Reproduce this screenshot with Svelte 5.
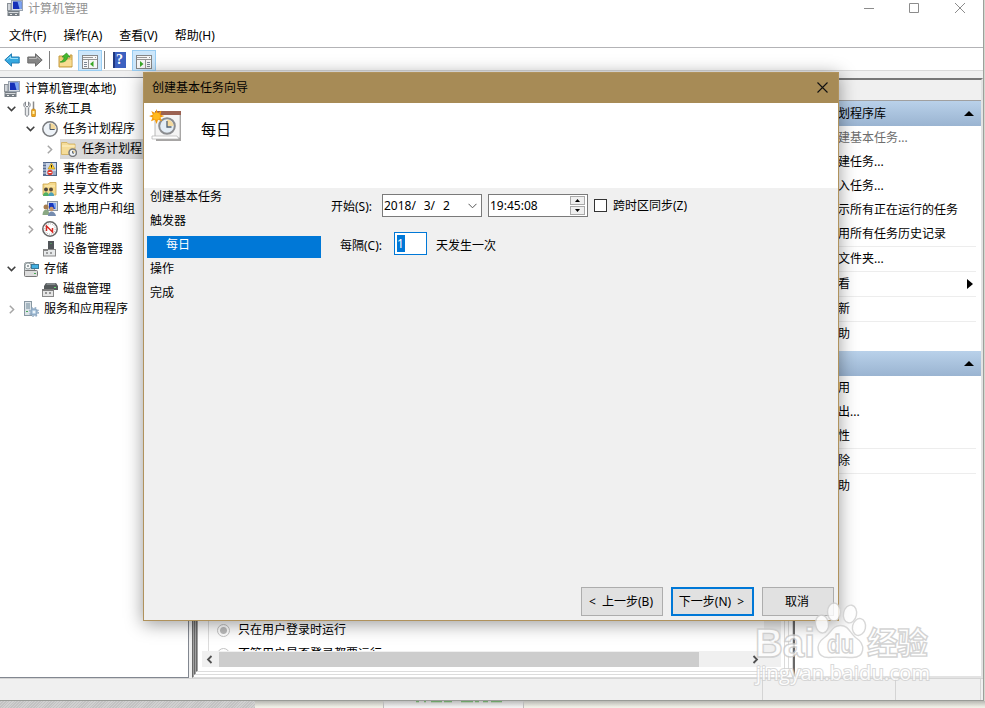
<script>
	const menus = ['文件(F)', '操作(A)', '查看(V)', '帮助(H)'];

	const tree = [
		{ level: 0, icon: 'computer', label: '计算机管理(本地)' },
		{ level: 1, icon: 'tools', label: '系统工具', open: true },
		{ level: 2, icon: 'clock', label: '任务计划程序', open: true },
		{ level: 3, icon: 'taskfolder', label: '任务计划程', open: false, selected: true },
		{ level: 2, icon: 'events', label: '事件查看器', open: false },
		{ level: 2, icon: 'shared', label: '共享文件夹', open: false },
		{ level: 2, icon: 'users', label: '本地用户和组', open: false },
		{ level: 2, icon: 'perf', label: '性能', open: false },
		{ level: 2, icon: 'device', label: '设备管理器' },
		{ level: 1, icon: 'storage', label: '存储', open: true },
		{ level: 2, icon: 'disk', label: '磁盘管理' },
		{ level: 1, icon: 'services', label: '服务和应用程序', open: false }
	];

	const groups = [
		{
			title: '划程序库',
			items: [
				{ label: '建基本任务...', muted: true },
				{ label: '建任务...' },
				{ label: '入任务...' },
				{ label: '示所有正在运行的任务' },
				{ label: '用所有任务历史记录', line: true },
				{ label: '文件夹...', line: true },
				{ label: '看', line: true, more: true },
				{ label: '新', line: true },
				{ label: '助' }
			]
		},
		{
			title: '',
			items: [
				{ label: '用' },
				{ label: '出...' },
				{ label: '性', line: true },
				{ label: '除', line: true },
				{ label: '助' }
			]
		}
	];

	const steps = [
		{ label: '创建基本任务' },
		{ label: '触发器' },
		{ label: '每日', active: true },
		{ label: '操作' },
		{ label: '完成' }
	];

	let interval = $state('1');
	let syncZones = $state(false);
</script>

{#snippet clockFace(cx, cy, r)}
	<circle {cx} {cy} {r} fill="#eef3f8" stroke="#77797c" stroke-width="1.5" />
	<path d="M{cx} {cy}V{cy - r + 1.2}A{r - 1.2} {r - 1.2} 0 0 1 {cx + r - 1.2} {cy}Z" fill="#f3d89a" />
	<path d="M{cx} {cy - r + 2}V{cy + 0.5}H{cx + r - 2.5}" fill="none" stroke="#4c5968" />
{/snippet}

{#snippet icon(name)}
	<svg class="icon" width="16" height="16" viewBox="0 0 16 16">
		{#if name === 'computer'}
			<rect x="4.5" y="0.5" width="11" height="10" fill="#d7dce2" stroke="#9aa4b0" />
			<rect x="6" y="1.5" width="8.5" height="7.5" fill="#1630b8" />
			<path d="M10.5 1.5h4V9h-2z" fill="#7ba5f2" />
			<rect x="0.5" y="3.5" width="3.5" height="7" fill="#d0d4d9" stroke="#8b9198" />
			<path d="M8 11h4l1 1H7z" fill="#9aa2ab" />
			<rect x="0.5" y="11" width="12" height="5" rx=".5" fill="#767e85" />
			<rect x="1.5" y="12" width="10" height="1" fill="#d5d8db" />
			<rect x="3" y="14" width="2" height="1" fill="#e8e8e8" /><rect x="8" y="14" width="2" height="1" fill="#e8e8e8" />
		{:else if name === 'tools'}
			<path d="M2.5 1v3.5L4 6l1.5-1.5V1c2.5 1.5 2 4.5.2 5.7V14q-1.7 3-3.4 0V6.7C.5 5.5 0 2.5 2.5 1z" fill="#e6e8ea" stroke="#777c82" stroke-width=".9" />
			<path d="M10.5 0.5v8" stroke="#8a8a8a" stroke-width="1.5" />
			<rect x="8.5" y="8" width="4" height="8" rx="1.5" fill="#eda61f" stroke="#b67812" stroke-width=".6" />
			<rect x="9.5" y="10" width="2" height="3" fill="#fff0ac" />
		{:else if name === 'clock'}
			{@render clockFace(8, 8, 7.2)}
		{:else if name === 'taskfolder'}
			<path d="M.5 1.5H6L7.5 3H14v10.5H.5z" fill="#f5dc98" stroke="#cfac58" stroke-width=".8" />
			<path d="M1 5h13" stroke="#fff4cc" />
			{@render clockFace(11.7, 11.7, 3.7)}
		{:else if name === 'events'}
			<rect x="2.5" y="1.5" width="12" height="13" fill="#cbd7ea" stroke="#4e6384" />
			<rect x="1" y="1" width="3" height="14" fill="#596d92" />
			<path d="M1 3h3M1 6h3M1 9h3M1 12h3" stroke="#dce3ee" />
			<path d="M9.5 2l3.5 6H6z" fill="#ffd230" stroke="#ad8512" stroke-width=".6" />
			<path d="M9.5 4v2.5" stroke="#222" />
			<circle cx="8" cy="11.5" r="2.7" fill="#db3d32" />
			<path d="M6.5 11.5h3" stroke="#fff" /><path d="M11 11h3M11 13h3" stroke="#667fa6" />
		{:else if name === 'shared'}
			<path d="M1 3h5l2-1.5h6V14H1z" fill="#f5d98c" stroke="#c9a34a" stroke-width=".8" />
			<path d="M3 5h10" stroke="#fff0bb" />
			<circle cx="4" cy="8.5" r="2" fill="#4c463c" /><path d="M1 15c0-5 6-5 6 0z" fill="#4faf63" />
			<circle cx="9" cy="8.5" r="2" fill="#5b4a36" /><path d="M6.500 15c0-5 5.500-5 5.500 0z" fill="#4da0b8" />
		{:else if name === 'users'}
			<rect x="5.5" y="0.5" width="10" height="9" fill="#d2d7df" stroke="#8994a1" />
			<rect x="7" y="2" width="7" height="6" fill="#1838be" /><path d="M11 2h3v6h-1z" fill="#7ca5f1" />
			<circle cx="4" cy="6" r="2.5" fill="#a67d50" /><path d="M.5 14c0-7 7-7 7 0z" fill="#8aa883" />
			<circle cx="9.5" cy="8" r="2.2" fill="#c6976b" /><path d="M6 15c0-6 7-6 8 0z" fill="#758caf" />
		{:else if name === 'perf'}
			<circle cx="8" cy="8" r="7.2" fill="#fff" stroke="#666" stroke-width="1.5" />
			<circle cx="8" cy="8" r="5.2" fill="none" stroke="#aaa" stroke-dasharray="1 1" />
			<path d="M4.5 10V5l6 6V7" fill="none" stroke="#d52923" stroke-width="1.5" />
		{:else if name === 'device'}
			<rect x="6" y="0" width="6" height="9" fill="#515559" /><rect x="8.5" y="2" width="1" height="1" fill="#58c76d" />
			<rect x="1.5" y="8.5" width="12" height="6.5" fill="#e6e8e9" stroke="#888" />
			<path d="M1 8h5v2H1z" fill="#888" /><path d="M5 11v2M9 11v2" stroke="#555" />
		{:else if name === 'storage'}
			<rect x="1.5" y="1.5" width="10" height="11" rx="2" fill="#d6dbdc" stroke="#8c9496" />
			<circle cx="5" cy="5" r="3" fill="#f8fafa" stroke="#9ba5a8" /><circle cx="5" cy="5" r="1" fill="#7c898c" />
			<rect x="8.5" y="3.5" width="7" height="4" fill="#43afe0" stroke="#397899" />
			<rect x="1.5" y="9.5" width="13" height="6" rx="1" fill="#dcdcdc" stroke="#777" />
			<rect x="11" y="12" width="2" height="1" fill="#43a950" />
		{:else if name === 'disk'}
			<path d="M4 2h10l2 3v4H2V5z" fill="#54595b" /><path d="M4.5 3h9" stroke="#aeb5b8" />
			<rect x="12" y="6" width="2" height="1" fill="#66df73" />
			<rect x="0.5" y="8.5" width="11" height="7" fill="#e5e5e5" stroke="#888" />
			<path d="M0 8h12v2H0z" fill="#7d7d7d" />
			<path d="M4 11v2M8 11v2" stroke="#444" />
		{:else if name === 'services'}
			<rect x="1.5" y="0.5" width="7" height="14" fill="#dce3e8" stroke="#8998a2" />
			<path d="M3 3h4M3 5h4M3 7h4" stroke="#708a9a" /><rect x="3" y="10" width="2" height="1" fill="#49a858" />
			<circle cx="11" cy="11" r="3" fill="#b9d1e5" stroke="#8faac4" stroke-width="1.5" />
			<circle cx="11" cy="11" r="4.3" fill="none" stroke="#8faac4" stroke-width="1.4" stroke-dasharray="1.7 1.7" />
			<circle cx="11" cy="11" r="1" fill="#fff" />
		{/if}
	</svg>
{/snippet}

{#snippet arrow(color, dir)}
	<svg class="nav" class:flip={dir === 'right'} width="16" height="14" viewBox="0 0 16 14">
		<path d="M.8 7L7.5 .8V4h7.7v6H7.5v3.2z" fill={color} stroke={dir === 'right' ? '#6c6c6c' : '#267fb6'} />
		<path d="M3 6.5L6.5 3.5V5.5H14" fill="none" stroke={dir === 'right' ? '#b9b9b9' : '#9be0fb'} />
	</svg>
{/snippet}

{#snippet paneIcon(side)}
	<svg width="17" height="15" viewBox="0 0 17 15">
		<rect x="0.5" y="1.5" width="15" height="13" fill="#f7f7f7" stroke="#868686" />
		<path d="M1 3.5h10M13 3.5h1M1 5.5h14" stroke="#969696" />
		{#if side === 'left'}
			<path d="M6.5 6v8" stroke="#999" /><path d="M2 8.5h3M2 10.5h3M2 12.5h3" stroke="#7c8794" />
			<path d="M11.5 7v6L8 10z" fill="#39a827" />
		{:else}
			<path d="M9.5 6v8" stroke="#999" /><path d="M11 8.5h3M11 10.5h3M11 12.5h3" stroke="#7c8794" />
			<path d="M4 7v6l3.5-3z" fill="#39a827" />
		{/if}
	</svg>
{/snippet}

<div class="screen">
	<div class="window">
		<header class="titlebar">
			{@render icon('computer')}
			<span>计算机管理</span>
			<svg class="controls" width="104" height="12" viewBox="0 0 104 12">
				<path d="M2 6.5h10M47.5 1.5h9v9h-9zM93 1l10 10M103 1L93 11" fill="none" stroke="#8c8c8c" />
			</svg>
		</header>
		<nav class="menubar">
			{#each menus as menu}
				<span>{menu}</span>
			{/each}
		</nav>
		<div class="toolbar">
			{@render arrow('#35a8df', 'left')}
			{@render arrow('#858585', 'right')}
			<i class="divider"></i>
			<svg width="16" height="16" viewBox="0 0 16 16">
				<path d="M1 4h5l1 2h5V3h2v12H1z" fill="#efcb75" stroke="#c49c43" />
				<path d="M2 8h11.5v6H2z" fill="#f8dc92" />
				<path d="M2 10c3-1 4-3 4-5H4l4.5-4L12 5H9.5c0 3-3 6-7.5 5z" fill="#44b92f" stroke="#2c861f" stroke-width=".6" />
			</svg>
			<span class="tool left">{@render paneIcon('left')}</span>
			<i class="divider second"></i>
			<span class="help">?</span>
			<span class="tool right">{@render paneIcon('right')}</span>
		</div>

		<main class="content">
			<section class="tree">
				{#each tree as node}
					<div class="node level{node.level}">
						{#if node.level > 0}
							<span class="twist">
								{#if node.open === true}
									<svg width="9" height="6" viewBox="0 0 9 6"><path d="M.7 .8l3.8 3.8L8.3 .8" fill="none" stroke="#404040" stroke-width="1.6" /></svg>
								{:else if node.open === false}
									<svg width="6" height="9" viewBox="0 0 6 9"><path d="M.8 .7l3.8 3.8L.8 8.3" fill="none" stroke="#a6a6a6" stroke-width="1.5" /></svg>
								{/if}
							</span>
						{/if}
						<span class="entry" class:selected={node.selected}>
							{@render icon(node.icon)}
							<span>{node.label}</span>
						</span>
					</div>
				{/each}
			</section>

			<section class="center">
				<div class="ridge"><div class="ridge"><div class="ridge inner">
					<div class="options">
						<div class="group">
							<p><i class="radio on"></i>只在用户登录时运行</p>
							<p><i class="radio"></i>不管用户是否登录都要运行</p>
						</div>
						<div class="vscroll">
							<svg width="9" height="6" viewBox="0 0 9 6"><path d="M1 1l3.5 3.5L8 1" fill="none" stroke="#b5b5b5" stroke-width="1.5" /></svg>
						</div>
					</div>
					<div class="hscroll">
						<svg width="7" height="9" viewBox="0 0 7 9"><path d="M5.5 1L2 4.5 5.5 8" fill="none" stroke="#505050" stroke-width="1.8" /></svg>
						<i class="thumb"></i>
						<svg class="end" width="7" height="9" viewBox="0 0 7 9"><path d="M1.5 1L5 4.5 1.5 8" fill="none" stroke="#505050" stroke-width="1.8" /></svg>
					</div>
				</div></div></div>
			</section>

			<aside class="actions">
				<div class="caption"></div>
				{#each groups as group}
					<h2>
						<span>{group.title}</span>
						<svg width="10" height="5" viewBox="0 0 10 5"><path d="M0 5L5 0l5 5z" /></svg>
					</h2>
					<ul>
						{#each group.items as item}
							<li class:muted={item.muted} class:line={item.line}>
								<span>{item.label}</span>
								{#if item.more}
									<svg width="6" height="10" viewBox="0 0 6 10"><path d="M0 0l6 5-6 5z" /></svg>
								{/if}
							</li>
						{/each}
					</ul>
				{/each}
			</aside>
		</main>

		<footer class="status">
			<i class="cell first"></i>
			<i class="cell"></i>
			<i class="cell last"></i>
		</footer>
	</div>

	<div class="desktop">
		<i class="stone"></i>
		<i class="paper"></i>
		<i class="tab">
			<svg width="88" height="2" viewBox="0 0 88 2"><path d="M0 .5h3M8 .5h2M15 .5h11M28 .5h8M45 .5h12M59 .5h4M67 .5h5M75 .5h11" stroke="#6fa36a" stroke-width="1.5" /></svg>
		</i>
	</div>

	<div class="dialog">
		<div class="dialog-title">
			<span>创建基本任务向导</span>
			<svg width="11" height="11" viewBox="0 0 11 11"><path d="M.5 .5l10 10M10.5 .5l-10 10" stroke="#111" stroke-width="1.1" /></svg>
		</div>
		<div class="banner">
			<svg width="33" height="33" viewBox="0 0 33 33">
				<path d="M7 4h25v28H7z" fill="#a7a5a4" />
				<path d="M6 3h25v26H6z" fill="#f4f4f4" stroke="#aaa" stroke-width=".8" />
				<path d="M6 2h26v4H6z" fill="#9b6252" />
				<path d="M3 27h25l2 3H3z" fill="#fff" stroke="#b3b3b3" stroke-width=".7" />
				<circle cx="18" cy="17" r="7.8" fill="#e3edf6" stroke="#8b8d90" stroke-width="2" />
				<path d="M18 17v-6.5a6.5 6.5 0 0 1 6.5 6.5z" fill="#f4daa0" />
				<path d="M18 12v6h4.5" fill="none" stroke="#526170" stroke-width="1.3" />
				<path d="M7.5 0l1.3 4 3.6-2.3-1 4 4 1.3-4 1.5 1.6 3.7-3.9-1.4L7.5 15l-1.6-4.2L2 12.2l1.5-3.7L0 7l3.8-1.3L2.3 2l3.9 2z" fill="#f49b0b" />
				<circle cx="7.5" cy="7.3" r="3.5" fill="#ffb91d" />
			</svg>
			<h1>每日</h1>
		</div>
		<div class="wizard">
			<ul class="steps">
				{#each steps as step}
					<li class:active={step.active}>{step.label}</li>
				{/each}
			</ul>
			<div class="form">
				<div class="row">
					<span class="label">开始(S):</span>
					<div class="field date">
						<span>2018/&nbsp; 3/&nbsp; 2</span>
						<svg width="9" height="6" viewBox="0 0 9 6"><path d="M.5 .8l4 4 4-4" fill="none" stroke="#555" /></svg>
					</div>
					<div class="field time">
						<span>19:45:08</span>
						<span class="spin">
							<i><svg width="5" height="3" viewBox="0 0 5 3"><path d="M0 3L2.5 0 5 3z" /></svg></i>
							<i><svg width="5" height="3" viewBox="0 0 5 3"><path d="M0 0h5L2.5 3z" /></svg></i>
						</span>
					</div>
					<label><input type="checkbox" bind:checked={syncZones} />跨时区同步(Z)</label>
				</div>
				<div class="row every">
					<span class="label">每隔(C):</span>
					<div class="count"><mark>{interval}</mark></div>
					<span class="unit">天发生一次</span>
				</div>
			</div>
		</div>
		<div class="buttons">
			<button class="back">&lt; 上一步(B)</button>
			<button class="next">下一步(N) &gt;</button>
			<button class="cancel">取消</button>
		</div>
	</div>

	<svg class="watermark" width="190" height="96" viewBox="0 0 190 96">
		<g class="paw">
			<ellipse cx="62" cy="32" rx="6.5" ry="9" transform="rotate(-8 62 32)" />
			<ellipse cx="74" cy="20" rx="6.5" ry="9" />
			<ellipse cx="90" cy="22" rx="6.5" ry="9" transform="rotate(12 90 22)" />
			<ellipse cx="99" cy="35" rx="6.5" ry="8.5" transform="rotate(12 99 35)" />
			<path d="M80.5 33.5c8 0 9 7 15 12 11 7 9 20-3 20-7 0-17-1-24 0-12 0-14-13-4-20 7-5 8-12 16-12z" />
		</g>
		<g class="brand">
			<text x="-5" y="65" font-size="40" textLength="60" lengthAdjust="spacingAndGlyphs">Bai</text>
			<text x="67" y="61" font-size="25" textLength="27" lengthAdjust="spacingAndGlyphs">du</text>
			<text x="107" y="62" font-size="31" textLength="61">经验</text>
			<text class="url" x="-4" y="88" font-size="20" textLength="174">jingyan.baidu.com</text>
		</g>
	</svg>
</div>

<style>
	:global(body) {
		overflow: hidden;
	}

	.screen {
		position: relative;
		width: 985px;
		height: 708px;
		overflow: hidden;
		background: #d4d8cf;
		color: #000;
		font: 12px/18px 'Noto Sans', 'Noto Sans CJK SC', sans-serif;
		white-space: nowrap;
	}

	.screen * {
		box-sizing: border-box;
	}

	svg {
		display: block;
		flex: none;
	}

	ul,
	p,
	h1,
	h2 {
		margin: 0;
		padding: 0;
		list-style: none;
		font-weight: normal;
	}

	.window {
		display: flex;
		flex-direction: column;
		width: 984px;
		height: 701px;
		border-right: 1px solid #9d9f9b;
		border-bottom: 1px solid #999b97;
		background: #f0f0f0;
	}

	.titlebar {
		display: flex;
		flex: none;
		gap: 5px;
		height: 24px;
		padding: 0 17px 0 7px;
		background: #fff;
		color: #929292;
	}

	.controls {
		margin: 2px 0 0 auto;
	}

	.menubar {
		display: flex;
		flex: none;
		gap: 17px;
		height: 24px;
		padding: 3px 9px;
		border-bottom: 1px solid #b3b3b6;
		background: #fff;
	}

	.toolbar {
		display: flex;
		flex: none;
		align-items: center;
		height: 23px;
		padding: 2px 0 0 4px;
		border-bottom: 1px solid #d9d9d9;
		background: #fff;
	}

	.flip {
		margin-left: 7px;
		transform: scaleX(-1);
	}

	.divider {
		width: 1px;
		height: 18px;
		margin: 0 8px 0 6px;
		background: #808080;
	}

	.divider.second {
		margin: 0 8px 0 2px;
	}

	.tool {
		height: 21px;
		padding: 3px 2px 1px 3px;
		border: 1px solid #99cdf2;
		background: #cde7fb;
	}

	.tool.left {
		margin-left: 4px;
	}

	.tool.right {
		margin-left: 6px;
	}

	.help {
		width: 13px;
		height: 16px;
		background: linear-gradient(90deg, #203880 2px, #3c60c0 2px);
		color: #fff;
		font: bold 14px/16px 'Liberation Serif', serif;
		text-align: center;
	}

	.content {
		display: flex;
		flex: 1;
		min-height: 0;
		padding-top: 6px;
	}

	.tree {
		width: 189px;
		padding-top: 1px;
		border: solid #828790;
		border-width: 1px 1px 1px 0;
		background: #fff;
	}

	.node {
		display: flex;
		height: 20px;
		padding-left: 4px;
	}

	.level2 {
		padding-left: 23px;
	}

	.level3 {
		padding-left: 42px;
	}

	.twist {
		display: flex;
		align-items: center;
		justify-content: center;
		width: 19px;
		padding-right: 4px;
	}

	.entry {
		display: flex;
		align-items: center;
		gap: 5px;
	}

	.selected {
		flex: 1;
		margin-left: -1px;
		padding-left: 1px;
		background: #d9d9d9;
	}

	.center {
		width: 601px;
		margin-left: 3px;
	}

	.ridge {
		height: 100%;
		border: 1px solid #dcdcdc;
		border-left-color: #696969;
		border-top-color: #777;
		padding: 0 3px 2px 1px;
		background: linear-gradient(90deg, #a0a0a0 1px, #fff 1px);
	}

	.inner {
		display: flex;
		flex-direction: column;
		padding-bottom: 4px;
	}

	.options {
		display: flex;
		flex: 1;
		min-height: 0;
		overflow: hidden;
	}

	.group {
		display: flex;
		flex: 1;
		flex-direction: column;
		justify-content: flex-end;
		gap: 6px;
		height: 583px;
		margin-left: 10px;
		padding-left: 8px;
		border-left: 1px solid #dcdcdc;
	}

	.group p {
		display: flex;
		align-items: center;
		gap: 8px;
		height: 18px;
	}

	.radio {
		width: 13px;
		height: 13px;
		border: 1px solid #c3c3c3;
		border-radius: 50%;
	}

	.radio.on {
		background: radial-gradient(circle, #bcbcbc 3px, #fff 4px);
	}

	.vscroll {
		display: flex;
		align-items: flex-end;
		justify-content: center;
		width: 17px;
		padding-bottom: 6px;
		background: #f0f0f0;
	}

	.hscroll {
		display: flex;
		flex: none;
		align-items: center;
		height: 16px;
		margin-left: 4px;
		padding: 0 22px 0 4px;
		background: #f0f0f0;
	}

	.thumb {
		align-self: flex-end;
		width: 480px;
		height: 15px;
		margin-left: 6px;
		background: #cdcdcd;
	}

	.end {
		margin-left: auto;
	}

	.actions {
		width: 190px;
		margin-top: 1px;
		border: 2px solid #696969;
		border-color: #777 #e3e3e3 #e3e3e3 #696969;
		background: #fff;
	}

	.caption {
		height: 21px;
		border-bottom: 1px solid #a0a0a0;
		background: #f0f0f0;
	}

	h2 {
		display: flex;
		align-items: center;
		justify-content: space-between;
		height: 25px;
		padding: 0 7px 0 43px;
		background: linear-gradient(#b9d1ea, #9ab4d1);
		font-size: 12px;
	}

	.actions ul {
		margin-bottom: 5px;
	}

	li {
		display: flex;
		align-items: center;
		height: 24px;
	}

	.actions li {
		justify-content: space-between;
		margin-right: 5px;
		padding: 0 3px 0 43px;
	}

	.actions .line {
		height: 25px;
		border-bottom: 1px solid #ededed;
	}

	.actions .muted {
		color: #6d6d6d;
	}

	.status {
		display: flex;
		flex: none;
		height: 22px;
		border-top: 1px solid #d5d5d5;
	}

	.cell {
		width: 133px;
		border-right: 1px solid #d4d4d4;
	}

	.cell.first {
		width: 763px;
	}

	.cell.last {
		width: 85px;
	}

	.desktop {
		display: flex;
		height: 7px;
		background: linear-gradient(#b8b8b3, #efefe6 6px);
	}

	.stone {
		width: 255px;
		background: repeating-linear-gradient(135deg, #c2c2c2 0 1px, #d0d0d0 1px 2px);
	}

	.paper {
		width: 128px;
	}

	.tab {
		width: 141px;
		padding-left: 32px;
		border: solid #bbb;
		border-width: 0 1px;
		background: linear-gradient(#bcbcbc, #f0f0f0 6px);
	}

	.dialog {
		position: absolute;
		top: 72px;
		left: 143px;
		display: flex;
		flex-direction: column;
		width: 696px;
		height: 549px;
		border: 1px solid #b0925c;
		background: #f0f0f0;
		box-shadow: 0 3px 17px rgba(0, 0, 0, 0.4);
	}

	.dialog-title {
		display: flex;
		flex: none;
		align-items: center;
		justify-content: space-between;
		height: 30px;
		padding: 0 10px 1px 8px;
		background: #a78b56;
	}

	.banner {
		display: flex;
		flex: none;
		gap: 19px;
		height: 85px;
		padding: 6px 5px;
		background: #fff;
	}

	h1 {
		margin-top: 9px;
		font-size: 15px;
		line-height: 22px;
	}

	.wizard {
		display: flex;
		flex: 1;
	}

	.steps {
		width: 177px;
		padding-left: 3px;
	}

	.steps li {
		height: 22px;
		margin-bottom: 2px;
		padding-left: 3px;
	}

	.steps li:first-child {
		margin-top: -2px;
	}

	.steps li.active {
		margin: 4px 0 0;
		padding: 0 0 4px 19px;
		background: #0078d7;
		color: #fff;
	}

	.form {
		padding: 6px 0 0 10px;
	}

	.row {
		display: flex;
		align-items: center;
		height: 23px;
	}

	.row .label {
		width: 51px;
		padding-top: 2px;
	}

	.field {
		display: flex;
		align-items: center;
		justify-content: space-between;
		width: 100px;
		height: 23px;
		border: 1px solid #7a7a7a;
		background: #fff;
		padding-left: 1px;
	}

	.date {
		padding-right: 4px;
		word-spacing: 0.8px;
	}

	.time {
		margin: 0 6px;
	}

	.spin {
		display: flex;
		flex-direction: column;
		gap: 1px;
		padding-right: 2px;
	}

	.spin i {
		display: flex;
		align-items: center;
		justify-content: center;
		width: 15px;
		height: 9px;
		border: 1px solid #aaa;
		background: #efefef;
	}

	label {
		display: flex;
		align-items: center;
		gap: 6px;
	}

	input {
		appearance: none;
		width: 13px;
		height: 13px;
		margin: 0;
		border: 1px solid #333;
		background: #fff;
	}

	.every {
		margin-top: 15px;
		padding-left: 9px;
	}

	.every .label {
		width: 54px;
		padding-top: 4px;
	}

	.unit {
		padding-top: 4px;
	}

	.count {
		width: 33px;
		height: 23px;
		margin-right: 9px;
		padding: 2px;
		border: 1px solid #0078d7;
		background: #fff;
	}

	mark {
		display: block;
		width: 8px;
		height: 17px;
		background: #0078d7;
		color: #fff;
		line-height: 17px;
	}

	.buttons {
		display: flex;
		gap: 8px;
		justify-content: flex-end;
		padding: 0 4px 4px;
	}

	button {
		width: 82px;
		height: 29px;
		padding: 0 2px 0 0;
		border: 1px solid #adadad;
		background: #e1e1e1;
		color: #000;
		font: inherit;
		word-spacing: 3px;
	}

	.next {
		width: 83px;
		border: 2px solid #0078d7;
	}

	.cancel {
		width: 72px;
	}

	.watermark {
		position: absolute;
		top: 592px;
		left: 760px;
		overflow: visible;
		opacity: 0.8;
	}

	.paw {
		fill: #fff;
		stroke: #cfcfcf;
		stroke-width: 1.4px;
	}

	.brand {
		fill: #fff;
		stroke: #c9c9c9;
		stroke-width: 1.4px;
		font-family: 'Liberation Sans', 'Noto Sans CJK SC', sans-serif;
		font-weight: bold;
	}

	.url {
		stroke: #d0d0d0;
		stroke-width: 2px;
		paint-order: stroke;
		font-family: 'Open Sans', sans-serif;
		font-weight: normal;
	}
</style>
